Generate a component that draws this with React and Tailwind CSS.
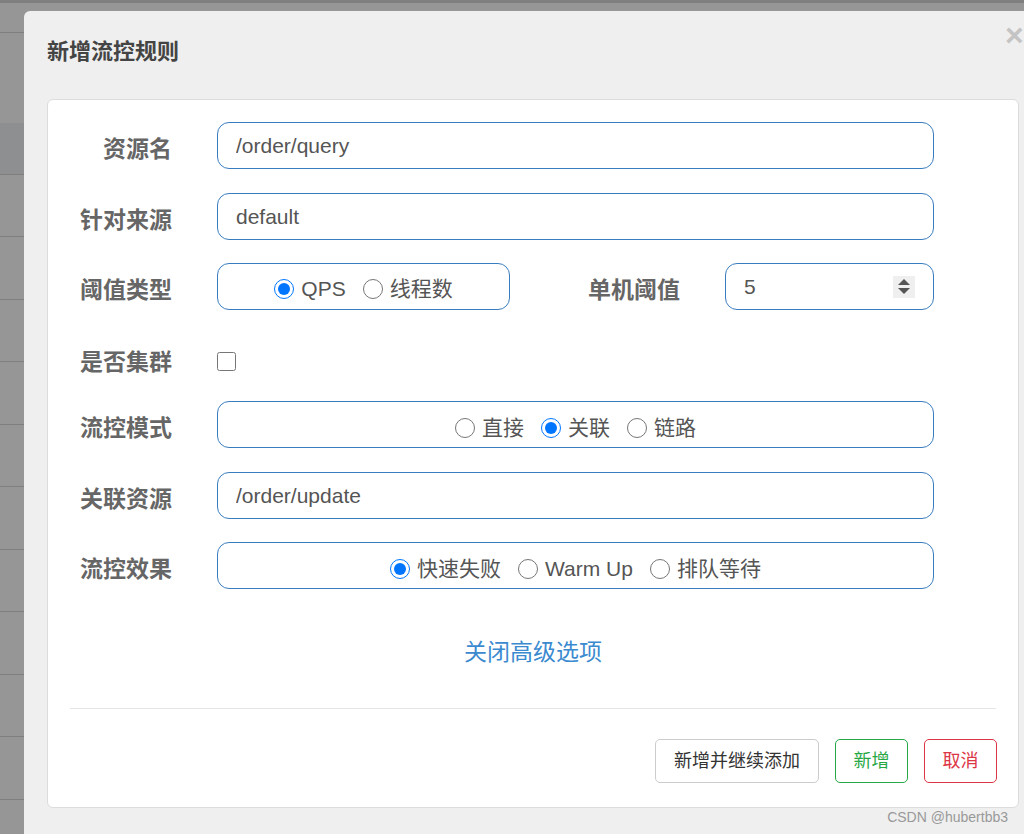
import React from "react";

const cjk = { fontFamily: '"Liberation Sans", "Noto Sans CJK SC", sans-serif' };

const Radio = ({ label, checked }) => (
  <label className="flex items-center gap-[7px]">
    <input
      type="radio"
      readOnly
      checked={checked}
      className="m-0 h-[20px] w-[20px] accent-[#0075ff]"
    />
    <span>{label}</span>
  </label>
);

const Row = ({ label, children, className = "", tight = false }) => (
  <div className={"flex items-center " + className}>
    <div
      className={
        tight
          ? "w-[124px] shrink-0 pt-[2px] text-right text-[23px] font-bold text-[#666]"
          : "w-[124px] shrink-0 pt-[8px] text-right text-[23px] font-bold text-[#666]"
      }
    >
      {label}
    </div>
    <div className="ml-[45px] flex w-[717px] items-center">{children}</div>
  </div>
);

const boxCls =
  "h-[47px] w-full rounded-[12px] border border-[#3a7dbf] bg-white px-[18px] text-[21px] text-[#555] outline-none";

const App = () => {
  const bgRows = [62, 63, 62, 63, 62, 63, 62, 63, 62, 63];

  return (
    <div
      className="relative h-[834px] w-[1024px] overflow-hidden bg-[#969696]"
      style={cjk}
    >
      {/* page behind the overlay */}
      <div className="flex flex-col">
        <div className="h-[3px] bg-[#7f7f7f]" />
        <div className="h-[30px] border-b border-[#7f7f7f]" />
        <div className="h-[90px]" />
        <div className="h-[52px] border-b border-[#7f7f7f] bg-[#8e8f91]" />
        {bgRows.map((h, i) => (
          <div
            key={i}
            className={
              h === 62
                ? "h-[62px] border-b border-[#7f7f7f]"
                : "h-[63px] border-b border-[#7f7f7f]"
            }
          />
        ))}
      </div>

      {/* modal */}
      <div className="absolute left-[24px] top-[11px] h-[900px] w-[1030px] rounded-tl-[6px] bg-[#efefef] pl-[23px] pt-[26px]">
        <h4 className="text-[22px] font-bold leading-[30px] text-[#444]">
          新增流控规则
        </h4>
        <span className="absolute left-[981px] top-[8px] text-[32px] font-bold leading-[32px] text-[#c4c4c4]">
          ×
        </span>

        <div className="mt-[32px] w-[972px] rounded-[6px] border border-[#dcdcdc] bg-white pt-[22px]">
          <div className="flex flex-col">
            <Row label="资源名">
              <input readOnly defaultValue="/order/query" className={boxCls} style={cjk} />
            </Row>
            <Row label="针对来源" className="mt-[24px]">
              <input readOnly defaultValue="default" className={boxCls} style={cjk} />
            </Row>
            <Row label="阈值类型" className="mt-[23px]">
              <div className="flex h-[47px] w-[293px] shrink-0 items-center justify-center gap-[17px] rounded-[12px] border border-[#3a7dbf] pt-[5px] text-[21px] text-[#555]">
                <Radio label="QPS" checked />
                <Radio label="线程数" checked={false} />
              </div>
              <div className="flex-1 pt-[8px] text-right text-[23px] font-bold text-[#666]">
                单机阈值
              </div>
              <div className="ml-[45px] flex h-[47px] w-[209px] shrink-0 items-center justify-between rounded-[12px] border border-[#3a7dbf] pl-[18px] pr-[18px] text-[21px] text-[#555]">
                <span>5</span>
                <span className="flex h-[22px] w-[22px] flex-col items-center justify-center gap-[3px] bg-[#efefef]">
                  <svg width="12" height="6" viewBox="0 0 12 6">
                    <path d="M6 0 L12 6 L0 6 Z" fill="#555" />
                  </svg>
                  <svg width="12" height="6" viewBox="0 0 12 6">
                    <path d="M0 0 L12 0 L6 6 Z" fill="#555" />
                  </svg>
                </span>
              </div>
            </Row>
            <Row label="是否集群" className="mt-[28px] h-[46px]" tight>
              <input
                type="checkbox"
                readOnly
                className="m-0 h-[19px] w-[19px] accent-[#0075ff]"
              />
            </Row>
            <Row label="流控模式" className="mt-[17px]">
              <div className="flex h-[47px] w-full items-center justify-center gap-[17px] rounded-[12px] border border-[#3a7dbf] pt-[6px] text-[21px] text-[#555]">
                <Radio label="直接" checked={false} />
                <Radio label="关联" checked />
                <Radio label="链路" checked={false} />
              </div>
            </Row>
            <Row label="关联资源" className="mt-[24px]">
              <input readOnly defaultValue="/order/update" className={boxCls} style={cjk} />
            </Row>
            <Row label="流控效果" className="mt-[23px]">
              <div className="flex h-[47px] w-full items-center justify-center gap-[17px] rounded-[12px] border border-[#3a7dbf] pt-[6px] text-[21px] text-[#555]">
                <Radio label="快速失败" checked />
                <Radio label="Warm Up" checked={false} />
                <Radio label="排队等待" checked={false} />
              </div>
            </Row>
          </div>

          <div className="mt-[47px] text-center text-[23px] leading-[32px] text-[#3b8ad0]">
            关闭高级选项
          </div>

          <div className="mx-[22px] mt-[40px] border-t border-[#e5e5e5]" />

          <div className="flex justify-end gap-[16px] pb-[24px] pr-[21px] pt-[30px]">
            <button className="h-[44px] rounded-[5px] border border-[#ccc] bg-white px-[18px] text-[18px] text-[#333]">
              新增并继续添加
            </button>
            <button className="h-[44px] w-[73px] rounded-[5px] border border-[#28a745] bg-white text-[18px] text-[#28a745]">
              新增
            </button>
            <button className="h-[44px] w-[73px] rounded-[5px] border border-[#dc3545] bg-white text-[18px] text-[#dc3545]">
              取消
            </button>
          </div>
        </div>
      </div>

      <div className="absolute bottom-[6px] right-[16px] text-[14px] text-[#999]">
        CSDN @hubertbb3
      </div>
    </div>
  );
};

export default App;
